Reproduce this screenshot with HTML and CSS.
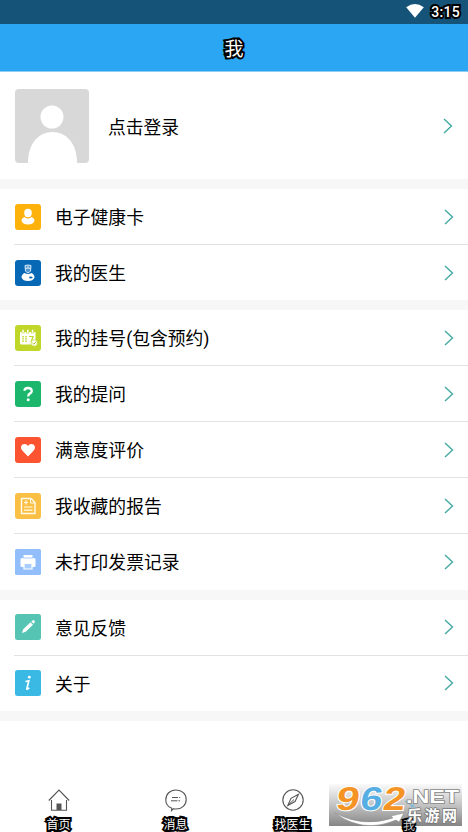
FILE: index.html
```html
<!DOCTYPE html>
<html lang="zh-CN">
<head>
<meta charset="utf-8">
<title>我</title>
<link rel="stylesheet" href="styles.css">
</head>
<body>
<div class="app">
  <div class="status">
    <svg class="wifi" width="18" height="14" viewBox="0 0 18 14"><path d="M.2 3.2Q9-3.2 17.800 3.200L9 13.700Z" fill="#fff"/></svg>
    <span class="clock outlined">3:15</span>
  </div>
  <header class="header"><h1 class="outlined">我</h1></header>
  <main class="main">
    <section class="profile">
      <svg class="avatar" width="74" height="74" viewBox="0 0 74 74"><rect width="74" height="74" rx="4" fill="#d8d8d8"/><circle cx="37" cy="28" r="11.500" fill="#fff"/><path d="M13 74C13 54 24 43 37.500 43S62 54 62 74Z" fill="#fff"/></svg>
      <span class="label">点击登录</span>
      <svg class="chevron" width="10" height="16" viewBox="0 0 10 16"><path d="M1 1l7.500 7L1 15"/></svg>
    </section>
    <section class="group">
      <div class="row">
        <svg class="icon" viewBox="0 0 26 26"><rect width="26" height="26" rx="3" fill="#fdb10b"/><ellipse cx="13" cy="9" rx="3.800" ry="4.200" fill="#fff"/><path d="M9.500 13Q13 16 16.500 13Q19.500 14 19.500 17Q18 20.500 13 20.500T6.500 17Q6.500 14 9.500 13Z" fill="#fff"/></svg>
        <span class="label">电子健康卡</span>
        <svg class="chevron" width="10" height="16" viewBox="0 0 10 16"><path d="M1 1l7.500 7L1 15"/></svg>
      </div>
      <div class="row">
        <svg class="icon" viewBox="0 0 26 26"><rect width="26" height="26" rx="3" fill="#0769b5"/><path d="M10 5.500Q13 4.500 16 5.500L15.500 11Q13 14.500 10.500 11Z" fill="#4f97cf" stroke="#e6f2fb" stroke-width=".9"/><path d="M10.300 8.200h5.400M13 5.800v2" stroke="#fff" stroke-width=".8"/><path d="M9.500 13Q13 15 16.500 13Q19.500 14.500 19.500 17.500Q18 21 13 21T6.500 17.500Q6.500 14.500 9.500 13Z" fill="#fff"/><ellipse cx="15.800" cy="17.400" rx="1.800" ry="1" fill="#0769b5"/></svg>
        <span class="label">我的医生</span>
        <svg class="chevron" width="10" height="16" viewBox="0 0 10 16"><path d="M1 1l7.500 7L1 15"/></svg>
      </div>
    </section>
    <section class="group">
      <div class="row">
        <svg class="icon" viewBox="0 0 26 26"><rect width="26" height="26" rx="3" fill="#c0d72a"/><path d="M5 7h15.500v12.500H6.500Q5 19.500 5 18Z" fill="#fff"/><path d="M8 4.800v3.500M12.800 4.800v3.500M17.600 4.800v3.500" stroke="#c0d72a" stroke-width="3"/><path d="M8 4.800v3M12.800 4.800v3M17.600 4.800v3" stroke="#fff" stroke-width="1.500"/><path d="M8 11v6M11 11v6" stroke="#c0d72a" stroke-width="1.500" stroke-dasharray="1.500 .7"/><path d="M14 11.500h4L16 17" fill="none" stroke="#c0d72a" stroke-width="1.200"/><circle cx="19.200" cy="18" r="3.200" fill="#fff" stroke="#c0d72a" stroke-width=".7"/><path d="M17.500 18l1.300 1.200 2.200-2.400" fill="none" stroke="#a9bf16"/></svg>
        <span class="label">我的挂号(包含预约)</span>
        <svg class="chevron" width="10" height="16" viewBox="0 0 10 16"><path d="M1 1l7.500 7L1 15"/></svg>
      </div>
      <div class="row">
        <svg class="icon" viewBox="0 0 26 26"><rect width="26" height="26" rx="3" fill="#1cb76d"/><path d="M9.500 9.800Q9.500 7 13 7T16.800 10Q16.800 11.600 14.800 12.600Q13.200 13.400 13.200 15.500" fill="none" stroke="#fff" stroke-width="2.300"/><circle cx="13.200" cy="18.800" r="1.500" fill="#fff"/></svg>
        <span class="label">我的提问</span>
        <svg class="chevron" width="10" height="16" viewBox="0 0 10 16"><path d="M1 1l7.500 7L1 15"/></svg>
      </div>
      <div class="row">
        <svg class="icon" viewBox="0 0 26 26"><rect width="26" height="26" rx="3" fill="#fc5430"/><path d="M13 19.500L7.500 13.800C4.500 10.500 6.500 7 9.500 7Q12 7 13 9Q14 7 16.500 7C19.500 7 21.500 10.500 18.500 13.800Z" fill="#fff"/></svg>
        <span class="label">满意度评价</span>
        <svg class="chevron" width="10" height="16" viewBox="0 0 10 16"><path d="M1 1l7.500 7L1 15"/></svg>
      </div>
      <div class="row">
        <svg class="icon" viewBox="0 0 26 26"><rect width="26" height="26" rx="3" fill="#fac046"/><path d="M6.500 5.500h9.500l4 4V20.500H6.500Z" fill="none" stroke="#fffbe9" stroke-width="1.400" stroke-linejoin="round"/><path d="M15.500 5.500v4.500H20" fill="none" stroke="#fffbe9"/><path d="M9 9.500h4M11 7.500v4M9 14h8.500M9 17.200h8.500" stroke="#fffbe9" stroke-width="1.200"/></svg>
        <span class="label">我收藏的报告</span>
        <svg class="chevron" width="10" height="16" viewBox="0 0 10 16"><path d="M1 1l7.500 7L1 15"/></svg>
      </div>
      <div class="row">
        <svg class="icon" viewBox="0 0 26 26"><rect width="26" height="26" rx="1.500" fill="#92befc"/><path d="M8.500 6h9v3.500h-9Z" fill="#fff"/><rect x="5.500" y="9" width="15" height="9" rx="1.500" fill="#fff"/><path d="M8 9h10" stroke="#92befc" stroke-width=".8"/><path d="M9 14.500h8V20H9Z" fill="#a9cdfd" stroke="#fff" stroke-width="1.200"/></svg>
        <span class="label">未打印发票记录</span>
        <svg class="chevron" width="10" height="16" viewBox="0 0 10 16"><path d="M1 1l7.500 7L1 15"/></svg>
      </div>
    </section>
    <section class="group">
      <div class="row">
        <svg class="icon" viewBox="0 0 26 26"><rect width="26" height="26" rx="2.500" fill="#55c4b2"/><path d="M7 19l1.200-3.800 7.300-7 2.500 2.500-7.300 7.100ZM16.300 7.400l1.200-1q1-.7 1.900.2t.2 1.900l-.9 1.200Z" fill="#fff"/></svg>
        <span class="label">意见反馈</span>
        <svg class="chevron" width="10" height="16" viewBox="0 0 10 16"><path d="M1 1l7.500 7L1 15"/></svg>
      </div>
      <div class="row">
        <svg class="icon" viewBox="0 0 26 26"><rect width="26" height="26" rx="2.500" fill="#3bb9e5"/><circle cx="14.300" cy="7.200" r="1.400" fill="#fff"/><path d="M10.500 11.500l3.300-.6-2 8q-.2 1 2.500-1" fill="none" stroke="#fff" stroke-width="1.700"/></svg>
        <span class="label">关于</span>
        <svg class="chevron" width="10" height="16" viewBox="0 0 10 16"><path d="M1 1l7.500 7L1 15"/></svg>
      </div>
    </section>
  </main>
  <nav class="tabs">
    <div class="tab">
      <svg width="22" height="24" viewBox="0 0 22 24"><path d="M.8 12.500L11 2l10.200 10.500M3.500 12v10.300h15V12" fill="none" stroke="#555" stroke-width="1.100"/><path d="M8.500 22v-6.500h5V22Z" fill="#555"/></svg>
      <span class="outlined">首页</span>
    </div>
    <div class="tab">
      <svg width="22" height="24" viewBox="0 0 22 24"><path d="M6.800 20.300C2.500 18.500.8 15.500.8 12C.8 6 5 2 11 2s10.200 4 10.200 9.500S17 21 11 21q-1.500 0-2.500-.3L6.500 22.700Z" fill="none" stroke="#555" stroke-width="1.100"/><path d="M7 9.500h6M14.200 9.500h1M6 12.800h6.500M13.500 12.800h1.500" stroke="#555"/></svg>
      <span class="outlined">消息</span>
    </div>
    <div class="tab">
      <svg width="22" height="24" viewBox="0 0 22 24"><circle cx="11" cy="12" r="10.200" fill="none" stroke="#555" stroke-width="1.100"/><path d="M5.800 17.500L9 10.300 16.500 6.200 13 13.500Z" fill="none" stroke="#555" stroke-width="1.100"/><path d="M6 17.300L12 11.500" stroke="#555"/></svg>
      <span class="outlined">找医生</span>
    </div>
    <div class="tab">
      <svg width="22" height="24" viewBox="0 0 22 24"><circle cx="11" cy="8" r="5.500" fill="none" stroke="#1da7ef"/><path d="M2 22q1-8 9-8t9 8" fill="none" stroke="#1da7ef"/></svg>
      <span class="outlined self">我</span>
    </div>
  </nav>
  <svg class="watermark" width="133" height="42" viewBox="0 0 133 42">
    <defs>
      <linearGradient id="shade" x2="0" y2="1"><stop stop-color="#fafafa"/><stop offset=".5" stop-color="#c4c4c4"/><stop offset="1" stop-color="#858585"/></linearGradient>
    </defs>
    <rect width="133" height="42" fill="url(#shade)"/>
    <path d="M76 17l12 8M88 15l-8 12" stroke="#69b6dc"/>
    <path d="M6 29Q34 44 64 34L62 32 75 29 70 38 67 36Q34 50 6 29Z" fill="#fff" stroke="#888" stroke-width=".5"/>
    <g class="numerals"><text transform="translate(6 25.500) skewX(-9)" textLength="23" lengthAdjust="spacingAndGlyphs" fill="#f59324">9</text><text transform="translate(30 25.500) skewX(-9)" textLength="22" lengthAdjust="spacingAndGlyphs" fill="#57aee2">6</text><text transform="translate(53 25.500) skewX(-9)" textLength="22" lengthAdjust="spacingAndGlyphs" fill="#f59324">2</text></g>
    <text class="net" x="77" y="19" textLength="53" lengthAdjust="spacingAndGlyphs">.NET</text>
    <text class="self-mark" x="74" y="45.500">我</text>
    <text class="site" x="78" y="37" textLength="50">乐游网</text>
  </svg>
</div>
</body>
</html>
```

FILE: styles.css
```css
* { box-sizing: border-box; }
body {
  margin: 0;
  background: #fff;
  color: #000;
  font-family: Roboto, "Noto Sans CJK SC", sans-serif;
}
.app {
  position: relative;
  display: flex;
  flex-direction: column;
  height: 832px;
  overflow: hidden;
}
.outlined {
  color: #fff;
  -webkit-text-stroke: 4px #000;
  paint-order: stroke fill;
  stroke-linejoin: round;
}
.status {
  display: flex;
  flex: none;
  align-items: center;
  justify-content: flex-end;
  gap: 7px;
  height: 24px;
  padding-right: 8px;
  background: #165379;
}
.wifi { margin-top: -2px; }
.clock { font-size: 14px; font-weight: 500; letter-spacing: .3px; line-height: 24px; }
.header {
  display: flex;
  flex: none;
  align-items: center;
  justify-content: center;
  height: 48px;
  background: #2ba6f3;
  border-bottom: 1px solid #8fcdf5;
}
.header h1 { margin: 0; padding-top: 3px; font-size: 19px; font-weight: 400; line-height: 45px; }
.main { flex: 1; }
.profile {
  display: flex;
  align-items: center;
  height: 107px;
  padding: 0 14px 0 15px;
}
.label { flex: 1; padding-top: 3px; font-size: 17.8px; line-height: 26px; }
.profile .label { margin-left: 19px; padding-top: 4px; }
.profile .chevron { margin-right: 1px; }
.group { border-top: 10px solid #f7f7f7; }
.group:last-child { border-bottom: 10px solid #f7f7f7; }
.row {
  display: flex;
  align-items: center;
  height: 56px;
  margin-left: 14px;
  padding: 0 14px 0 1px;
  border-bottom: 1px solid #e2e2e2;
}
.row:last-child { height: 55.300px; border-bottom: 0; }
.icon { width: 26px; height: 26px; margin-right: 14px; }
.chevron { fill: none; stroke: #43aaa2; stroke-width: 1.400; }
.tabs { display: flex; flex: none; height: 44px; }
.tab {
  display: flex;
  flex: 1;
  flex-direction: column;
  align-items: center;
  font-size: 12px;
  line-height: 18px;
}
.tab svg { flex: none; margin-bottom: 4px; }
.tab .self { visibility: hidden; }
.watermark { position: absolute; left: 329px; top: 784px; overflow: visible; }
.numerals {
  font: 700 33px "Liberation Sans", sans-serif;
  stroke: #fff;
  stroke-width: 2px;
  paint-order: stroke fill;
}
.net {
  font: 700 18px "Liberation Sans", sans-serif;
  fill: #fff;
  stroke: #888;
  stroke-width: 1.500px;
  paint-order: stroke fill;
}
.site {
  font: 700 15px "Noto Sans CJK SC", sans-serif;
  fill: #fff;
  stroke: #777;
  stroke-width: 1.500px;
  paint-order: stroke fill;
}
.self-mark {
  font: 12px "Noto Sans CJK SC", sans-serif;
  fill: #ccc;
  stroke: #000;
  stroke-width: 3.500px;
  paint-order: stroke fill;
}
```
